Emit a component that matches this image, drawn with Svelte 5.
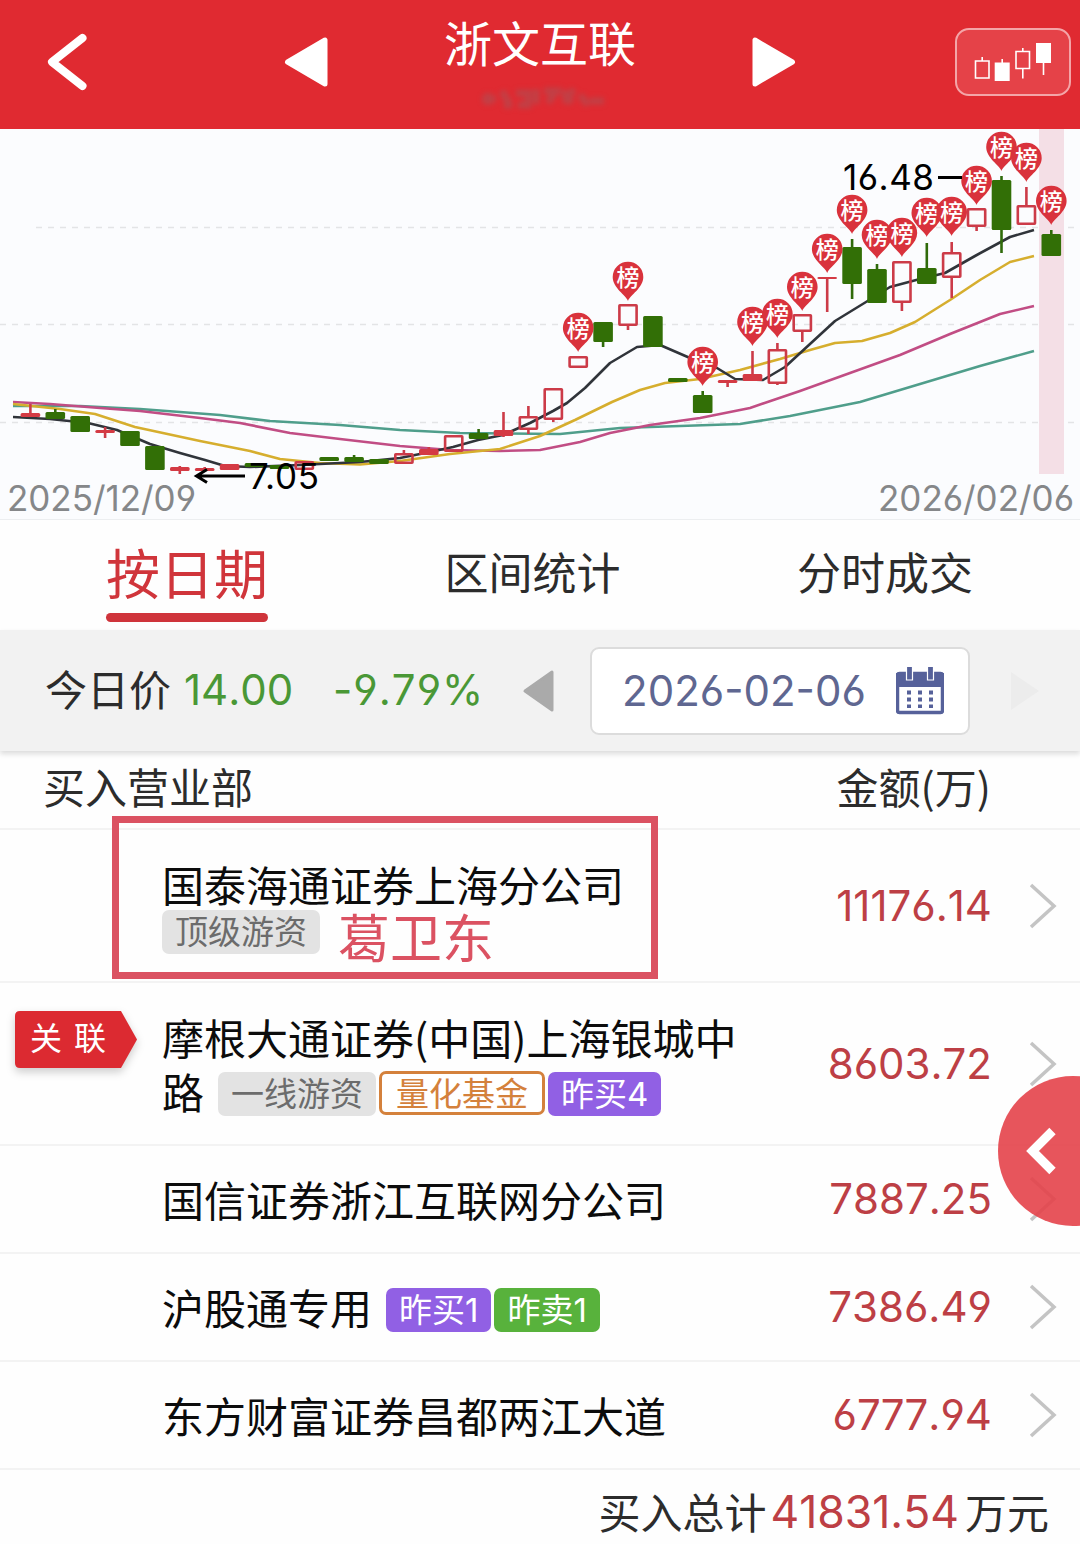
<script>
    const STEP = 24.9;
    const FIRST = 30.4;

    // kind: g = filled green, r = filled red, h = hollow red
    // [kind, top, bottom, high, low, pin tip]
    const candles = [
        ['r', 413, 417, 404, 417],
        ['g', 412, 419, 409, 419],
        ['g', 416, 432, 416, 432],
        ['r', 430, 433, 427, 438],
        ['g', 431, 446, 431, 446],
        ['g', 446, 470, 446, 470],
        ['r', 467, 471, 466, 474],
        ['r', 468, 471, 467, 471],
        ['r', 464, 470, 464, 470],
        ['g', 463, 467, 463, 467],
        ['g', 465, 469, 465, 469],
        ['h', 461, 470, 461, 470],
        ['g', 457, 461, 457, 461],
        ['g', 457, 462, 455, 462],
        ['g', 459, 464, 459, 464],
        ['h', 453, 464, 450, 464],
        ['r', 449, 455, 447, 455],
        ['h', 435, 452, 435, 452],
        ['g', 433, 439, 429, 439],
        ['r', 430, 436, 412, 437],
        ['h', 416, 430, 406, 434],
        ['h', 388, 420, 388, 422],
        ['h', 356, 368, 356, 368, 351],
        ['g', 322, 342, 322, 347],
        ['h', 304, 326, 304, 330, 300],
        ['g', 316, 347, 316, 347],
        ['g', 378, 382, 378, 382],
        ['g', 395, 413, 391, 413, 385],
        ['r', 380, 383, 380, 387],
        ['r', 374, 381, 351, 381, 345],
        ['h', 349, 384, 343, 385, 337],
        ['h', 314, 332, 314, 342, 310],
        ['r', 277, 279, 277, 312, 272],
        ['g', 247, 284, 239, 299, 233],
        ['g', 269, 303, 264, 303, 258],
        ['h', 261, 303, 261, 311, 256],
        ['g', 268, 284, 243, 284, 236],
        ['h', 252, 278, 242, 298, 235],
        ['h', 208, 227, 208, 231, 204],
        ['g', 180, 230, 176, 253, 170],
        ['h', 205, 225, 187, 225, 181],
        ['g', 234, 256, 230, 256, 224]
    ].map(([kind, top, bottom, high, low, pin], i) => ({
        kind, top, bottom, high, low, pin,
        x: FIRST + i * STEP
    }));

    const averages = [
        { color: '#4f9e8b', points: '13,406 80,406 140,409 220,415 270,421 340,425 400,430 460,433 560,434 620,428 680,426 740,424 790,416 860,402 920,384 980,366 1034,351' },
        { color: '#c14d84', points: '13,402 50,404 100,408 140,411 200,418 240,423 290,433 340,439 400,446 450,450 500,451 540,450 580,442 610,433 650,425 700,418 750,408 800,391 850,373 900,355 950,334 1000,314 1034,306' },
        { color: '#d6ae2e', points: '13,404 60,409 95,414 135,427 200,441 250,451 280,459 320,463 360,464.5 400,461 450,454 500,449 540,436 575,420 612,402 640,390 665,383 700,379 740,370 780,359 810,350 835,343 862,341 890,333 915,322 950,300 980,280 1010,262 1034,256' },
        { color: '#30343a', points: '13,417 50,419 88,423 117,430 150,444 180,453 205,460 225,466 250,467 300,465 360,462 400,458 430,452 453,447 478,440 503,435 530,423 553,411 567,403 585,388 610,363 637,347 660,345 690,358 717,368 735,379 763,380 785,367 810,344 835,321 866,302 890,287 920,279 945,273 975,256 1010,237 1034,230' }
    ];

    const tabs = ['按日期', '区间统计', '分时成交'];
    let active = 0;

    const rows = [
        { lines: ['国泰海通证券上海分公司'], tags: [['grey', '顶级游资']], note: '葛卫东', amount: '11176.14', size: 'tall' },
        { lines: ['摩根大通证券(中国)上海银城中', '路'], tags: [['grey', '一线游资'], ['orange', '量化基金'], ['purple', '昨买4']], linked: true, amount: '8603.72', size: 'taller' },
        { lines: ['国信证券浙江互联网分公司'], tags: [], amount: '7887.25' },
        { lines: ['沪股通专用'], tags: [['purple', '昨买1'], ['green', '昨卖1']], amount: '7386.49' },
        { lines: ['东方财富证券昌都两江大道'], tags: [], amount: '6777.94' }
    ];
</script>

<div class="page">
    <header>
        <svg class="back" width="44" height="62" viewBox="0 0 44 62"><path d="M38.500 7 L8 31 L38.500 55" /></svg>
        <svg class="prev" width="46" height="54" viewBox="0 0 46 54"><path d="M42 5 V49 L4.500 27 Z" /></svg>
        <div class="title">
            <h1>浙文互联</h1>
            <svg class="smudge" width="140" height="34" viewBox="0 0 140 34">
                <path d="M8 18 h14 M14 12 v12 M28 10 l8 14 M30 24 h8 M42 12 h12 v12 h-10 M62 8 v15 M70 10 h12 l-8 12 M88 10 l10 12 M90 22 l10 -14 M106 14 l8 10 M116 20 h14" />
            </svg>
        </div>
        <svg class="next" width="46" height="54" viewBox="0 0 46 54"><path d="M4 5 V49 L41.500 27 Z" /></svg>
        <button class="kline" aria-label="K线">
            <svg width="80" height="44" viewBox="0 0 80 44">
                <g fill="none" stroke="#fff" stroke-width="1.600">
                    <path d="M1.500 18 h13.500 v17 h-13.500 z M8.200 14 v4" />
                    <path d="M42 8.500 h13.500 v17 h-13.500 z M48.800 5 v3.500 M48.800 25.500 v10" />
                    <path d="M28.200 16 v4 M69.500 20 v12" />
                </g>
                <path fill="#fff" d="M20.700 19.500 h15 v18.500 h-15 z M62 -0.500 h15 v20.500 h-15 z" />
            </svg>
        </button>
    </header>

    <svg class="chart" width="1080" height="390" viewBox="0 129 1080 390">
        <g class="grid">
            <path d="M36 227.500 H1080" />
            <path d="M0 324.500 H1080" />
            <path d="M0 422.500 H1080" />
        </g>
        <rect x="1039" y="129" width="25" height="345" fill="#f4dfe6" />
        {#each averages as line}
            <polyline points={line.points} stroke={line.color} />
        {/each}
        {#each candles as c}
            <g class={c.kind}>
                <path d="M{c.x} {c.high} V{c.top} M{c.x} {c.bottom} V{c.low}" />
                {#if c.kind === 'h'}
                    <rect x={c.x - 8.6} y={c.top + 1.2} width="17.200" height={c.bottom - c.top - 2.4} rx="0.5" />
                {:else}
                    <rect x={c.x - 9.8} y={c.top} width="19.600" height={c.bottom - c.top} rx="1.5" />
                {/if}
            </g>
        {/each}
        {#each candles.filter(c => c.pin) as c}
            <g class="pin" transform="translate({c.x} {c.pin})">
                <path d="M0 1 C-2 -5 -15.300 -12 -15.300 -23 A15.300 15.300 0 1 1 15.300 -23 C15.300 -12 2 -5 0 1 Z" />
                <text x="0" y="-14.500" text-anchor="middle">榜</text>
            </g>
        {/each}
        <path class="pointer" d="M938 177.500 H962" />
        <path class="pointer" d="M245 476 H197 M207 469.500 L196.500 476 L207 482.500" />
        <text class="price" x="843" y="190" textLength="91">16.48</text>
        <text class="price" x="249" y="489" textLength="70">7.05</text>
        <text class="day" x="7" y="510.500" textLength="189">2025/12/09</text>
        <text class="day" x="878" y="510.500" textLength="196">2026/02/06</text>
    </svg>

    <nav>
        {#each tabs as tab, i}
            <button class:active={i === active} on:click={() => active = i}>{tab}</button>
        {/each}
    </nav>

    <section class="quote">
        <span class="label">今日价</span>
        <span class="num now">14.00</span>
        <span class="num change">-9.79%</span>
        <svg class="day-prev" width="32" height="44" viewBox="0 0 32 44"><path d="M30 3 V41 L3 22 Z" /></svg>
        <div class="date">
            <span class="num">2026-02-06</span>
            <svg width="48" height="48" viewBox="0 0 48 48">
                <rect x="1.500" y="6.500" width="45" height="39" rx="2" fill="none" stroke="#56619a" stroke-width="3.500" />
                <path fill="#56619a" d="M0 6 h48 v14 h-48 z" />
                <path fill="#56619a" stroke="#fff" stroke-width="1.200" d="M10.500 -1 h6 v14 h-6 z M31.500 -1 h6 v14 h-6 z" />
                <path stroke="#56619a" stroke-width="4" stroke-dasharray="4 3" d="M13 23.500 V41 M24 23.500 V41 M35 23.500 V41" />
            </svg>
        </div>
        <svg class="day-next" width="32" height="44" viewBox="0 0 32 44"><path d="M2 3 V41 L30 22 Z" /></svg>
    </section>

    <div class="table-head">
        <span>买入营业部</span>
        <span>金额(万)</span>
    </div>

    {#each rows as row}
        <div class="row {row.size || ''}">
            <div class="side">
                {#if row.linked}
                    <div class="ribbon">
                        <svg width="122" height="57" viewBox="0 0 122 57"><path d="M5 0 H106 L122 28.500 L106 57 H5 Q0 57 0 52 V5 Q0 0 5 0 Z" /></svg>
                        <span>关联</span>
                    </div>
                {/if}
            </div>
            <div class="dept">
                {#each row.lines.slice(0, row.size ? 1 : 0) as line}
                    <div class="name">{line}</div>
                {/each}
                <div class="line">
                    {#each row.lines.slice(row.size ? 1 : 0) as line}
                        <span class="name">{line}</span>
                    {/each}
                    {#each row.tags as [color, text]}
                        <span class="tag {color}">{text}</span>
                    {/each}
                    {#if row.note}<span class="note">{row.note}</span>{/if}
                </div>
            </div>
            <span class="num amount">{row.amount}</span>
            <svg class="more" width="28" height="46" viewBox="0 0 28 46"><path d="M2 2 L25 23 L2 44" /></svg>
            {#if row.note}<div class="frame"></div>{/if}
        </div>
    {/each}

    <footer>
        <span>买入总计</span>
        <span class="num total">41831.54</span>
        <span>万元</span>
    </footer>

    <button class="drawer" aria-label="展开">
        <svg width="30" height="48" viewBox="0 0 30 48"><path d="M26.500 4 L6.500 24 L26.500 44" /></svg>
    </button>
</div>

<style>
    :global(body) {
        background: #fefefe;
    }

    .page {
        position: relative;
        width: 1080px;
        height: 1544px;
        overflow: hidden;
        background: #fefefe;
        color: #2c2c2c;
        font-family: "Noto Sans CJK SC", sans-serif;
        font-weight: 400;
        font-size: 42px;
        line-height: 1;
    }

    button {
        border: 0;
        padding: 0;
        background: none;
        color: inherit;
        font: inherit;
    }

    svg {
        display: block;
        flex: none;
    }

    .num {
        font-family: Inter, sans-serif;
        font-weight: 400;
        font-feature-settings: "cv03", "cv04";
        font-kerning: none;
        white-space: nowrap;
    }

    header {
        display: flex;
        height: 129px;
        background: #e02a31;
        color: #fff;
    }

    .back { margin: 31px 0 0 44px; }
    .back path { fill: none; stroke: #fff; stroke-width: 8; stroke-linecap: round; stroke-linejoin: round; }
    .prev { margin: 35px 0 0 195px; }
    .next { margin: 35px 0 0 115px; }
    .prev path, .next path { fill: #fff; stroke: #fff; stroke-width: 5; stroke-linejoin: round; }
    .title { margin-left: 115px; width: 192px; }

    h1 {
        margin: 16px 0 0;
        font-size: 48px;
        font-weight: 400;
        line-height: 50px;
        white-space: nowrap;
    }

    .smudge { margin: 15px 0 0 30px; filter: blur(2.5px); }
    .smudge path { fill: none; stroke: #b5484e; stroke-width: 7; opacity: 0.7; }

    .kline {
        display: flex;
        box-sizing: border-box;
        width: 116px;
        height: 68px;
        margin: 28px 0 0 158px;
        padding: 13px 0 0 17px;
        border: 2px solid #f4a5a8;
        border-radius: 14px;
        background: #e54248;
    }

    .chart { background: #fbfcfe; }
    .grid path { stroke: #e3e4e6; stroke-width: 1.5; stroke-dasharray: 6 6; }
    .chart polyline { fill: none; stroke-width: 2.6; stroke-linejoin: round; }
    .g path, .h path, .r path { fill: none; stroke-width: 2.6; }
    .g path { stroke: #2f6a0a; }
    .g rect { fill: #326f06; }
    .r path, .h path { stroke: #cc3b48; }
    .r rect { fill: #d43a44; }
    .h rect { fill: none; stroke: #cc3b48; stroke-width: 2.6; }
    .pin path { fill: #d9323c; }
    .pin text { fill: #fff; font-size: 23px; font-weight: 500; }
    .pointer { fill: none; stroke: #000; stroke-width: 3; }

    .price, .day {
        font-family: Inter, sans-serif;
        font-weight: 400;
        font-feature-settings: "cv03", "cv04";
        font-size: 35px;
    }

    .day { fill: #858789; }

    nav {
        display: flex;
        box-sizing: border-box;
        height: 111px;
        padding: 0 107px 0 106px;
        justify-content: space-between;
        border-top: 1px solid #eceef0;
    }

    nav button {
        height: 102px;
        box-sizing: border-box;
        font-size: 44px;
    }

    nav button.active {
        display: flex;
        flex-direction: column;
        padding-top: 25px;
        color: #d0353b;
        font-size: 54px;
    }

    nav button.active::after {
        content: "";
        width: 162px;
        height: 9px;
        margin-top: 14px;
        border-radius: 5px;
        background: #cf343b;
    }

    .quote {
        display: flex;
        position: relative;
        box-sizing: border-box;
        height: 121px;
        padding-left: 45px;
        align-items: center;
        background: #f2f2f2;
        box-shadow: 0 3px 5px #dcdcdc;
    }

    .label { padding-bottom: 5px; }
    .now { width: 108px; margin-left: 13px; color: #4a9836; }
    .change { width: 148px; margin-left: 41px; color: #4a9836; letter-spacing: 1px; }
    .now, .change { padding-bottom: 2px; }
    .day-prev { margin-left: 41px; }
    .day-prev path { fill: #aaa; stroke: #aaa; stroke-width: 3; stroke-linejoin: round; }
    .day-next { margin-left: 39px; }
    .day-next path { fill: #ececec; }

    .date {
        display: flex;
        flex: none;
        box-sizing: border-box;
        width: 380px;
        height: 88px;
        margin-left: 36px;
        padding: 0 24px 0 30px;
        align-items: center;
        justify-content: space-between;
        border: 2px solid #dcdcdc;
        border-radius: 9px;
        background: #fff;
        color: #5f6791;
    }

    .table-head {
        display: flex;
        box-sizing: border-box;
        height: 79px;
        padding: 14px 89px 0 43px;
        justify-content: space-between;
        border-bottom: 2px solid #f3f3f3;
    }

    .row {
        display: flex;
        position: relative;
        box-sizing: border-box;
        height: 108px;
        align-items: center;
        border-bottom: 2px solid #f3f3f3;
        color: #0c0c0c;
    }

    .tall { height: 153px; }
    .taller { height: 163px; }
    .side { width: 162px; align-self: flex-start; }
    .dept { flex: 1; }
    .name { line-height: 54px; white-space: nowrap; }
    .tall .name { padding: 3px 0 0; line-height: 48px; }
    .tall .line { height: 47px; }
    .line { display: flex; align-items: center; }
    .line .name + .tag { margin-left: 14px; }

    .tag {
        position: relative;
        top: 3px;
        box-sizing: border-box;
        height: 44px;
        margin-right: 3px;
        padding: 0 13px;
        border-radius: 7px;
        font-family: Inter, "Noto Sans CJK SC", sans-serif;
        font-size: 33px;
        line-height: 45px;
        white-space: nowrap;
    }

    .tall .tag { top: 1px; }
    .grey { background: #e3e3e3; color: #6c6c6c; }
    .orange { top: 2px; padding: 0 14px; border: 3px solid #d4813c; background: #fff; color: #d4813c; line-height: 40px; }
    .purple { background: #9160e4; color: #fff; }
    .green { background: #58b23c; color: #fff; }
    .note { margin: 9px 0 0 15px; color: #db5262; font-size: 52px; line-height: 44px; }

    .ribbon { position: relative; margin: 28px 0 0 15px; }
    .ribbon svg { filter: drop-shadow(0 4px 4px #ccc); }
    .ribbon path { fill: #dc2a31; }
    .ribbon span { position: absolute; left: 15px; top: 9px; color: #fff; font-size: 32px; letter-spacing: 12px; }

    .amount { color: #bd3f45; }
    .more { margin: 0 23px 0 37px; }
    .more path { fill: none; stroke: #c4c4c4; stroke-width: 3.5; }

    .frame {
        position: absolute;
        left: 112px;
        top: -14px;
        width: 546px;
        height: 163px;
        box-sizing: border-box;
        border: 7px solid #db5262;
    }

    footer {
        display: flex;
        height: 86px;
        padding-right: 31px;
        align-items: center;
        justify-content: flex-end;
    }

    footer span { padding-bottom: 4px; }
    footer .total { margin: 0 6px 0 4px; padding-bottom: 1px; color: #bd3f45; font-size: 44.5px; }

    .drawer {
        position: absolute;
        left: 998px;
        top: 1076px;
        width: 150px;
        height: 150px;
        padding-left: 28px;
        border-radius: 50%;
        background: rgba(228, 66, 74, 0.9);
    }

    .drawer path { fill: none; stroke: #fff; stroke-width: 9; }
</style>
